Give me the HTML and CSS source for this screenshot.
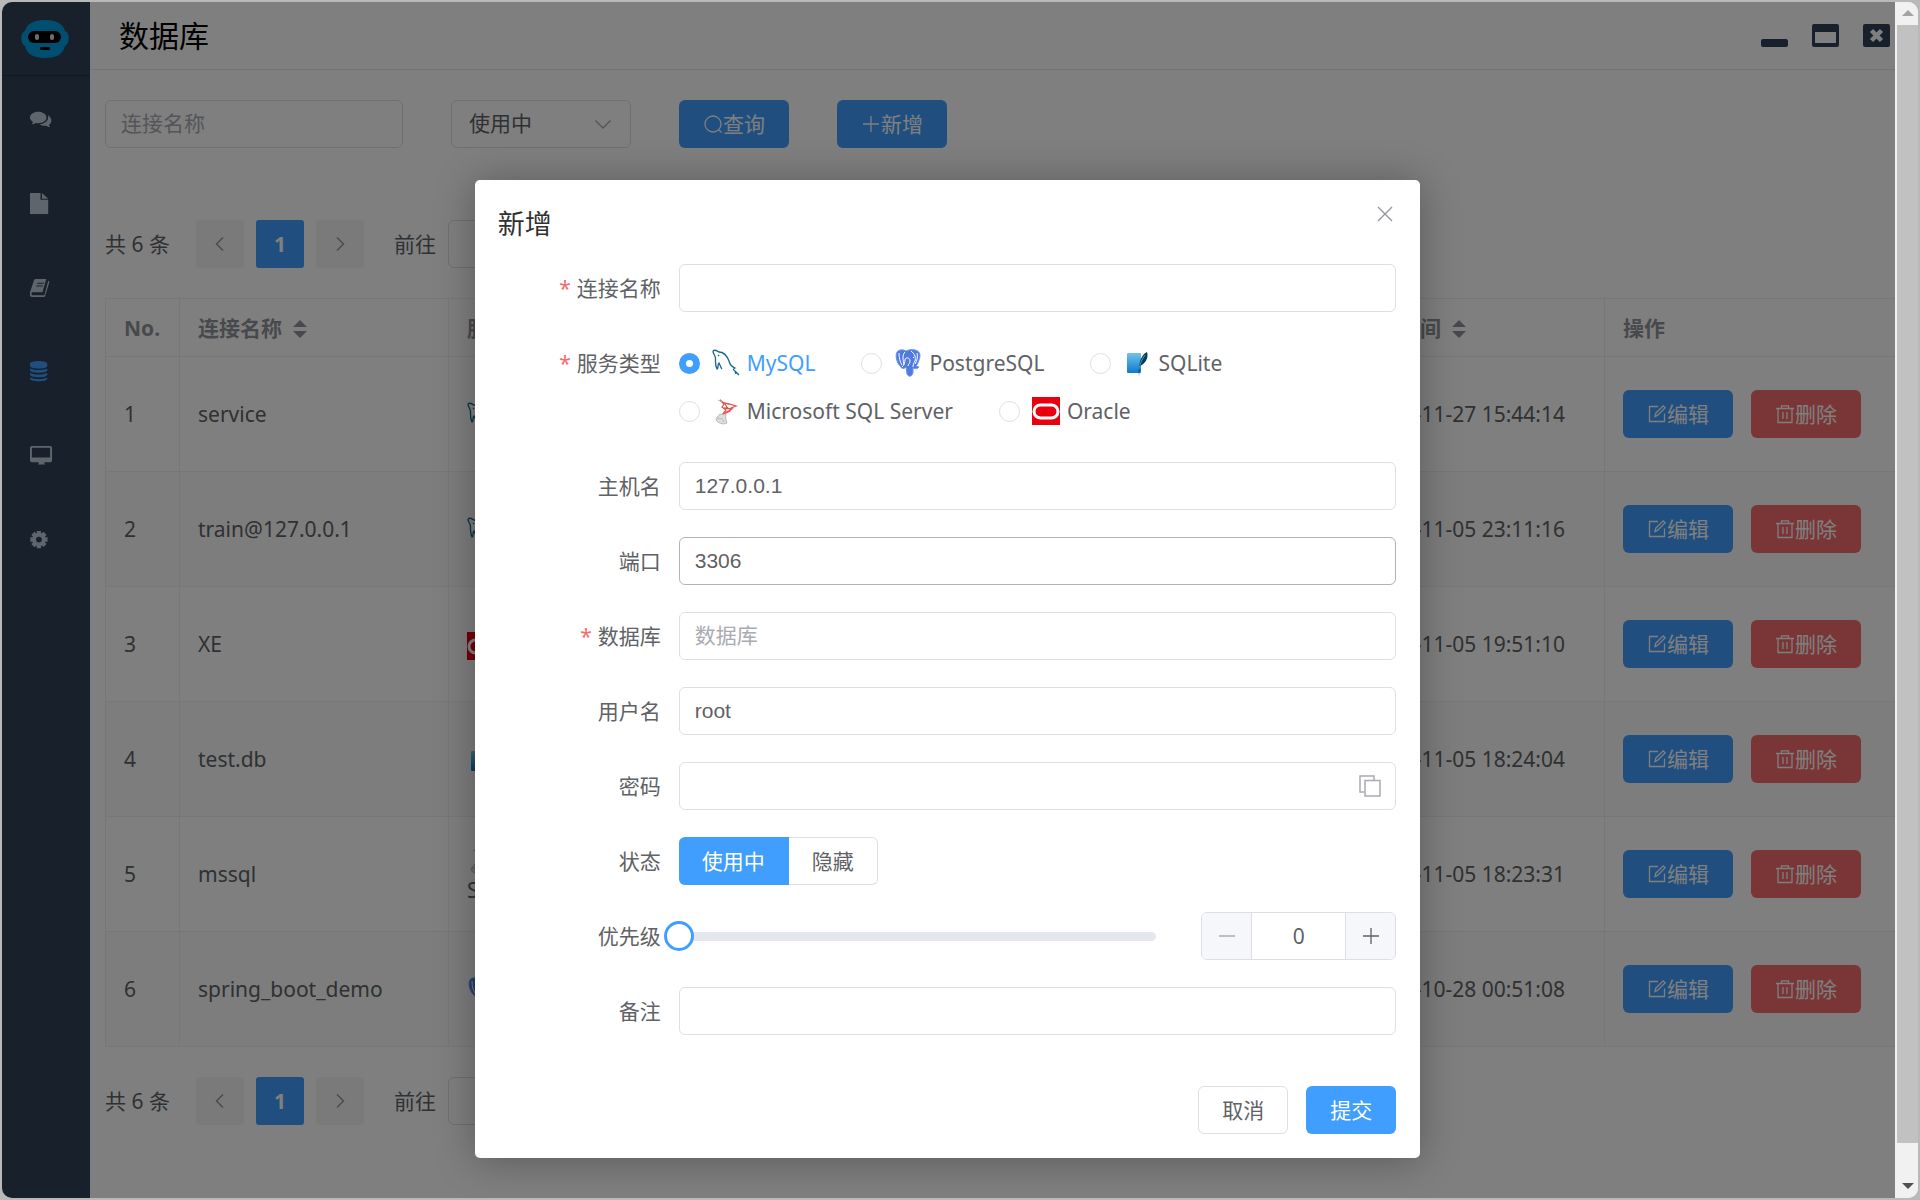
FILE: index.html
```html
<!DOCTYPE html>
<html lang="zh-CN">
<head>
<meta charset="utf-8">
<title>数据库</title>
<link rel="stylesheet" href="styles.css">
</head>
<body>
<svg class="sprite" aria-hidden="true">
  <symbol id="i-edit" viewBox="0 0 20 20"><path d="M11 2.500H2.500v15h15V9.500M8 12.500l.8-3.300 7.400-7.400 2 2-7.400 7.400z" fill="none" stroke="currentColor" stroke-width="1.300"/></symbol>
  <symbol id="i-trash" viewBox="0 0 20 20"><path d="M1 4.500h18M6.500 4.500V1.800h7v2.700M3 4.500v14h14v-14M8 8v7M12 8v7" fill="none" stroke="currentColor" stroke-width="1.300"/></symbol>
  <symbol id="i-search" viewBox="0 0 20 20"><path d="M15.200 15.200l3.300 3.300M18 10a8 8 0 1 1-16 0 8 8 0 0 1 16 0z" fill="none" stroke="currentColor" stroke-width="1.300"/></symbol>
  <symbol id="i-plus" viewBox="0 0 20 20"><path d="M10 2v16M2 10h16" fill="none" stroke="currentColor" stroke-width="1.300"/></symbol>
  <symbol id="i-minus" viewBox="0 0 20 20"><path d="M2 10h16" fill="none" stroke="currentColor" stroke-width="1.300"/></symbol>
  <symbol id="i-left" viewBox="0 0 20 20"><path d="M13 3.500L6.500 10l6.500 6.500" fill="none" stroke="currentColor" stroke-width="1.400"/></symbol>
  <symbol id="i-right" viewBox="0 0 20 20"><path d="M7 3.500l6.500 6.500L7 16.500" fill="none" stroke="currentColor" stroke-width="1.400"/></symbol>
  <symbol id="i-down" viewBox="0 0 20 20"><path d="M2.500 6.500L10 14l7.500-7.500" fill="none" stroke="currentColor" stroke-width="1.400"/></symbol>
  <symbol id="i-sort" viewBox="0 0 14 20"><path d="M0 8l7-7 7 7zM0 12l7 7 7-7z" fill="currentColor"/></symbol>
  <symbol id="i-mysql" viewBox="0 0 28 28"><path d="M1 2c2-2 4 0 6 1 5 0 8 4 10 9 1 4 3 6 6 7-2 1-2 2 0 3l4 4M1 2c0 3 2 4 2.500 7 0 4-.5 7 1.500 11 2-1 0-4 2-6 1 2 2 5 3 6M23 22l1 3M6 6l1 1" fill="none" stroke="#12688f" stroke-width="1.300"/></symbol>
  <symbol id="i-postgres" viewBox="0 0 28 28"><path d="M4 2c3-2 6-1 8 0 3-1 5-2 9-1 5 1 6 5 4 10-1 3-2 5-3 6l3 1c-1 2-4 2-6 1v5c-1 4-5 4-6 1l-1-7c-2 2-4 2-5 0C3 15 0 5 4 2z" fill="#4f7be0" stroke="#7096e8" stroke-width="1"/><path d="M11 3c-3 3-2 8-1 13M8 18c2-2 3-4 3-8 2-2 5-1 5 2s-2 3-2 5M17 2c4 3 5 7 4 10-1 2-2 3-2 6M20 8l-1 1M5 4c0 5 1 9 3 12M23 4c1 4 0 8-2 11" fill="none" stroke="#fff" stroke-width="1"/></symbol>
  <symbol id="i-sqlite" viewBox="0 0 28 28"><defs><linearGradient id="g-sqlite" x2="0" y2="1"><stop stop-color="#74c2ea"/><stop offset="1" stop-color="#0b7cc9"/></linearGradient></defs><rect x="4" y="4" width="14" height="20" rx="1" fill="url(#g-sqlite)"/><path d="M24 3c2 6-2 12-7 14l-1 10c-1-9 1-21 8-24z" fill="#073c58"/><path d="M22 6c-3 4-5 9-6 14" fill="none" stroke="#3a9ccf"/></symbol>
  <symbol id="i-mssql" viewBox="0 0 28 28"><path d="M8 3l4 3 5 1 7 2-5 2-1 3-8 4 4-5-4-3 2-3zM13 7l3 5M12 11l8 1-7 4" fill="none" stroke="#e2554f" stroke-width="1.300"/><path d="M6 3l4 2M8 17c2 1 4 0 6 0-1 3 0 6 1 9-4 2-9 0-11-3 0-2 2-4 4-6zM5 22c3-2 6 0 7 3" fill="#ddd" stroke="#b8b8b8"/></symbol>
  <symbol id="i-oracle" viewBox="0 0 28 28"><path d="M0 0h28v28H0z" fill="#e9000f"/><rect x="2" y="8" width="24" height="13" rx="6.500" fill="none" stroke="#fff" stroke-width="3"/></symbol>
</svg>

<div class="window">
  <div class="app">
    <nav class="sidebar" aria-label="主菜单">
      <a class="logo" href="#" aria-label="首页"><svg viewBox="0 0 48 38"><path d="M24 0c12 0 18 4 20 11 5 2 5 12 0 15-2 8-8 12-20 12S6 34 4 26c-5-3-5-13 0-15C6 4 12 0 24 0z" fill="#009ee3"/><rect x="7" y="11" width="33" height="12" rx="6"/><rect x="14" y="14" width="4" height="6" rx="2" fill="#ddd"/><rect x="29" y="14" width="4" height="6" rx="2" fill="#ddd"/><rect x="19" y="27" width="10" height="3" rx="1"/></svg></a>
      <ul class="menu">
        <li><a href="#" aria-label="对话"><svg viewBox="0 0 24 20"><path d="M8.500 2C3.800 2 0 4.800 0 8c0 2 1.200 3.600 3.200 4.700-.3.900-1 1.700-1.500 2.200 1.600 0 3-.5 4.300-1.300 6.500 1 11.200-1.800 11.200-5.600C17.200 4.800 13.300 2 8.500 2z" fill="currentColor"/><path d="M18.600 5.500c1.600 4.700-2.200 8.700-8.600 9.500 2 1.500 4.700 1.800 6.800 1.400 1.300.8 2.600 1.300 4.200 1.300-.5-.5-1-1.100-1.300-1.900 3.500-2.500 3.700-8-1.100-10.300z" fill="currentColor"/></svg></a></li>
        <li><a href="#" aria-label="文档"><svg viewBox="0 0 24 24"><path d="M0 1h11v7h8v15H0zM12.500 1L19 7h-6.500z" fill="currentColor"/></svg></a></li>
        <li><a href="#" aria-label="知识库"><svg viewBox="0 0 24 24"><path d="M6 3h11l-4 14H3c-2 0-2 3 0 3h12l4-15c1 0 1 1 1 2l-4 13c0 1-1 2-2 2H3c-3 0-4-2-3-5L4 5c0-1 1-2 2-2zM8 7l-1 1h7l1-1zm-1 3l-1 1h7l1-1z" fill="currentColor" fill-rule="evenodd"/></svg></a></li>
        <li class="active"><a href="#" aria-label="数据库"><svg viewBox="0 0 24 24"><path d="M0 4c0-4 18-4 18 0v2c0 4-18 4-18 0zM0 8.500c2 2.500 16 2.500 18 0v2.300c0 3.500-18 3.500-18 0zM0 13.200c2 2.500 16 2.500 18 0v2.300c0 3.500-18 3.500-18 0zM0 18c2 2.500 16 2.500 18 0v1.500c0 3.500-18 3.500-18 0z" fill="currentColor"/></svg></a></li>
        <li><a href="#" aria-label="监控"><svg viewBox="0 0 24 24"><path d="M2 2h19q2 0 2 2v13q0 2-2 2h-6v1.500l1 1h-8l1-1V19H2q-2 0-2-2V4q0-2 2-2zm0 2v10h19V4z" fill="currentColor" fill-rule="evenodd"/></svg></a></li>
        <li><a href="#" aria-label="设置"><svg viewBox="0 0 24 24"><path d="M9.300 3v18M3 5.600l12.700 12.700M.3 12h18M3 18.400L15.700 5.600" stroke="currentColor" stroke-width="4.500"/><circle cx="9.300" cy="12" r="5" fill="none" stroke="currentColor" stroke-width="4"/><circle cx="9.300" cy="12" r="3" fill="#304156"/></svg></a></li>
      </ul>
    </nav>
    <main class="main">
      <header class="topbar">
        <h1>数据库</h1>
        <div class="controls">
          <button type="button" aria-label="最小化"><svg viewBox="0 0 27 23"><rect y="15" width="27" height="8" rx="2" fill="currentColor"/></svg></button>
          <button type="button" aria-label="最大化"><svg viewBox="0 0 27 23"><path d="M2 0h23q2 0 2 2v19q0 2-2 2H2q-2 0-2-2V2q0-2 2-2zm1 8v11h21V8z" fill="currentColor" fill-rule="evenodd"/></svg></button>
          <button type="button" aria-label="关闭"><svg viewBox="0 0 27 23"><rect width="27" height="23" rx="2" fill="currentColor"/><path d="M8.500 6.500l10 10m0-10l-10 10" stroke="#fff" stroke-width="4.500"/></svg></button>
        </div>
      </header>
      <div class="content">
        <form class="search">
          <input class="field name-filter" type="text" placeholder="连接名称" aria-label="连接名称">
          <div class="select">
            <select class="field" aria-label="状态"><option>使用中</option><option>隐藏</option></select>
            <svg><use href="#i-down"/></svg>
          </div>
          <button class="btn primary" type="button"><svg><use href="#i-search"/></svg>查询</button>
          <button class="btn primary" type="button"><svg><use href="#i-plus"/></svg>新增</button>
        </form>
        <div class="pager">
          <span class="total">共 6 条</span>
          <button type="button" aria-label="上一页"><svg><use href="#i-left"/></svg></button>
          <button type="button" class="current">1</button>
          <button type="button" aria-label="下一页"><svg><use href="#i-right"/></svg></button>
          <label class="jump">前往<input class="field" type="text"></label>
        </div>
        <table class="grid">
          <colgroup><col class="c-no"><col class="c-name"><col class="c-type"><col class="c-rest"><col class="c-time"><col class="c-ops"></colgroup>
          <thead><tr><th>No.</th><th>连接名称<svg class="sort"><use href="#i-sort"/></svg></th><th>服务类型</th><th></th><th>更新时间<svg class="sort"><use href="#i-sort"/></svg></th><th>操作</th></tr></thead>
          <tbody>
            <tr><td>1</td><td>service</td><td><svg class="db"><use href="#i-mysql"/></svg>MySQL</td><td></td><td class="time">2022-11-27 15:44:14</td><td><div class="ops"><button class="btn primary" type="button"><svg><use href="#i-edit"/></svg>编辑</button><button class="btn danger" type="button"><svg><use href="#i-trash"/></svg>删除</button></div></td></tr>
            <tr><td>2</td><td>train@127.0.0.1</td><td><svg class="db"><use href="#i-mysql"/></svg>MySQL</td><td></td><td class="time">2022-11-05 23:11:16</td><td><div class="ops"><button class="btn primary" type="button"><svg><use href="#i-edit"/></svg>编辑</button><button class="btn danger" type="button"><svg><use href="#i-trash"/></svg>删除</button></div></td></tr>
            <tr><td>3</td><td>XE</td><td><svg class="db"><use href="#i-oracle"/></svg>Oracle</td><td></td><td class="time">2022-11-05 19:51:10</td><td><div class="ops"><button class="btn primary" type="button"><svg><use href="#i-edit"/></svg>编辑</button><button class="btn danger" type="button"><svg><use href="#i-trash"/></svg>删除</button></div></td></tr>
            <tr><td>4</td><td>test.db</td><td><svg class="db"><use href="#i-sqlite"/></svg>SQLite</td><td></td><td class="time">2022-11-05 18:24:04</td><td><div class="ops"><button class="btn primary" type="button"><svg><use href="#i-edit"/></svg>编辑</button><button class="btn danger" type="button"><svg><use href="#i-trash"/></svg>删除</button></div></td></tr>
            <tr><td>5</td><td>mssql</td><td><svg class="db"><use href="#i-mssql"/></svg>Microsoft<br>SQL Server</td><td></td><td class="time">2022-11-05 18:23:31</td><td><div class="ops"><button class="btn primary" type="button"><svg><use href="#i-edit"/></svg>编辑</button><button class="btn danger" type="button"><svg><use href="#i-trash"/></svg>删除</button></div></td></tr>
            <tr><td>6</td><td>spring_boot_demo</td><td><svg class="db"><use href="#i-postgres"/></svg>PostgreSQL</td><td></td><td class="time">2022-10-28 00:51:08</td><td><div class="ops"><button class="btn primary" type="button"><svg><use href="#i-edit"/></svg>编辑</button><button class="btn danger" type="button"><svg><use href="#i-trash"/></svg>删除</button></div></td></tr>
          </tbody>
        </table>
        <div class="pager">
          <span class="total">共 6 条</span>
          <button type="button" aria-label="上一页"><svg><use href="#i-left"/></svg></button>
          <button type="button" class="current">1</button>
          <button type="button" aria-label="下一页"><svg><use href="#i-right"/></svg></button>
          <label class="jump">前往<input class="field" type="text"></label>
        </div>
      </div>
    </main>
    <div class="overlay">
      <form class="dialog" role="dialog" aria-labelledby="dlg-title">
        <header class="dialog-head">
          <h2 id="dlg-title">新增</h2>
          <button type="button" class="close" aria-label="关闭"><svg viewBox="0 0 16 16"><path d="M1 1l14 14M15 1L1 15" stroke="currentColor" stroke-width="1.300"/></svg></button>
        </header>
        <div class="rows">
          <div class="row"><label class="req" for="f-name">连接名称</label><input id="f-name" class="field" type="text"></div>
          <div class="row top"><span class="label req" id="l-type">服务类型</span>
            <div class="radios" role="radiogroup" aria-labelledby="l-type">
              <label><input type="radio" name="type" checked><svg class="db"><use href="#i-mysql"/></svg><span>MySQL</span></label>
              <label><input type="radio" name="type"><svg class="db"><use href="#i-postgres"/></svg><span>PostgreSQL</span></label>
              <label><input type="radio" name="type"><svg class="db"><use href="#i-sqlite"/></svg><span>SQLite</span></label>
              <label><input type="radio" name="type"><svg class="db"><use href="#i-mssql"/></svg><span>Microsoft SQL Server</span></label>
              <label><input type="radio" name="type"><svg class="db"><use href="#i-oracle"/></svg><span>Oracle</span></label>
            </div>
          </div>
          <div class="row"><label for="f-host">主机名</label><input id="f-host" class="field" type="text" value="127.0.0.1"></div>
          <div class="row"><label for="f-port">端口</label><input id="f-port" class="field hover" type="text" value="3306"></div>
          <div class="row"><label class="req" for="f-db">数据库</label><input id="f-db" class="field" type="text" placeholder="数据库"></div>
          <div class="row"><label for="f-user">用户名</label><input id="f-user" class="field" type="text" value="root"></div>
          <div class="row"><label for="f-pass">密码</label>
            <div class="suffix"><input id="f-pass" class="field" type="password"><button type="button" aria-label="复制"><svg viewBox="0 0 24 24"><path d="M6 18H2V2h14v4M7 6.500h15V22H7z" fill="none" stroke="currentColor" stroke-width="1.500"/></svg></button></div></div>
          <div class="row"><span class="label" id="l-state">状态</span>
            <div class="segments" role="radiogroup" aria-labelledby="l-state"><label><input type="radio" name="state" checked><span>使用中</span></label><label><input type="radio" name="state"><span>隐藏</span></label></div></div>
          <div class="row"><label for="f-prio">优先级</label>
            <div class="priority"><input id="f-prio" class="slider" type="range" min="0" max="100" value="0">
              <div class="stepper"><button type="button" aria-label="减少" disabled><svg><use href="#i-minus"/></svg></button><input type="text" value="0" aria-label="优先级数值"><button type="button" aria-label="增加"><svg><use href="#i-plus"/></svg></button></div></div></div>
          <div class="row"><label for="f-note">备注</label><input id="f-note" class="field" type="text"></div>
        </div>
        <footer class="dialog-foot"><button type="button" class="btn plain">取消</button><button type="submit" class="btn primary">提交</button></footer>
      </form>
    </div>
  </div>
  <div class="scrollbar" aria-hidden="true"><svg class="up" viewBox="0 0 12 6"><path d="M0 6l6-6 6 6z" fill="#a3a3a3"/></svg><div class="thumb"></div><svg class="dn" viewBox="0 0 12 6"><path d="M0 0h12L6 6z" fill="#505050"/></svg></div>
</div>
</body>
</html>
```

FILE: styles.css
```css
* { box-sizing: border-box; }

body {
  margin: 0;
  height: 100vh;
  padding: 2px;
  overflow: hidden;
  background: #b9b9b9;
  color: #606266;
  font: 21px/30px "Noto Sans", "Noto Sans CJK SC", sans-serif;
}

button, input, select { font: inherit; color: inherit; margin: 0; }
button { padding: 0; border: 0; background: none; cursor: pointer; }
svg { display: block; flex: none; }
.sprite { position: absolute; width: 0; height: 0; }

.window { display: flex; height: 100%; border-radius: 10px; overflow: hidden; background: #f1f1f1; }
.app { position: relative; display: flex; flex: 1; min-width: 0; overflow: hidden; background: #fff; }

/* sidebar */
.sidebar { flex: none; width: 88px; background: #304156; }
.logo { display: flex; align-items: center; justify-content: center; height: 74px; padding-right: 2px; border-bottom: 1px solid #233145; }
.logo svg { width: 48px; height: 38px; }
.menu { list-style: none; margin: 0; padding: 1px 0 0; }
.menu a { display: flex; align-items: center; height: 84px; padding-left: 28px; color: #bfcbd9; }
.menu svg { width: 23px; height: 23px; }
.menu .active a { color: #409eff; }

/* header */
.main { flex: 1; min-width: 0; overflow: hidden; }
.topbar { display: flex; align-items: center; justify-content: space-between; height: 68px; padding: 0 5px 0 29px; border-bottom: 1px solid #e6e6e6; }
.topbar h1 { margin: 0; font-size: 30px; font-weight: 400; line-height: 45px; color: #000; }
.controls { display: flex; gap: 24px; color: #304156; }
.controls svg { width: 27px; height: 23px; }

.content { padding: 30px 0 0 15px; }
.search { display: flex; gap: 48px; }
.field { width: 100%; height: 48px; padding: 0 15px; border: 1px solid #dcdfe6; border-radius: 6px; background: #fff; outline: 0; font-family: "Liberation Sans", "Noto Sans CJK SC", sans-serif; }
.field::placeholder { color: #a8abb2; opacity: 1; }
.field.hover { border-color: #b0b3ba; }
.name-filter { width: 298px; }
.select { position: relative; width: 180px; }
.select select { appearance: none; padding: 0 17px; }
.select svg { position: absolute; right: 18px; top: 14px; width: 20px; height: 20px; color: #a8abb2; pointer-events: none; }

.btn { display: flex; align-items: center; justify-content: center; height: 48px; padding: 0 23px; border: 1px solid transparent; border-radius: 6px; white-space: nowrap; }
.btn svg { width: 20px; height: 20px; }
.primary { background: #409eff; color: #fff; }
.danger { background: #f56c6c; color: #fff; }
.plain { background: #fff; border-color: #dcdfe6; }

.pager { display: flex; align-items: center; padding: 72px 0 30px; gap: 12px; }
.grid + .pager { padding-top: 30px; }
.total { margin-right: 14px; }
.pager button { display: flex; align-items: center; justify-content: center; width: 48px; height: 48px; border-radius: 3px; background: #f4f4f5; color: #909399; }
.pager button svg { width: 20px; height: 20px; }
.pager .current { background: #409eff; color: #fff; font-weight: 700; }
.jump { display: flex; align-items: center; gap: 12px; margin-left: 18px; }
.jump .field { width: 75px; }

/* table */
.grid { width: 100%; table-layout: fixed; border-collapse: separate; border-spacing: 0; border-top: 1px solid #ebeef5; border-left: 1px solid #ebeef5; }
.grid th, .grid td { padding: 0 18px; border-right: 1px solid #ebeef5; border-bottom: 1px solid #ebeef5; text-align: left; white-space: nowrap; overflow: hidden; }
.grid th { height: 58px; color: #909399; font-weight: 700; }
.grid td { height: 115px; }
.grid th:last-child, .grid td:last-child { border-right: 0; }
.grid tbody tr:nth-child(even) { background: #fafafa; }
.grid .time { padding-right: 39px; text-align: right; }
.c-no { width: 74px; }
.c-name { width: 269px; }
.c-type { width: 170px; }
.c-time { width: 266px; }
.c-ops { width: 290px; }
.sort { display: inline-block; width: 14px; height: 20px; margin-left: 11px; vertical-align: -3px; }
.db { display: inline-block; width: 28px; height: 28px; vertical-align: middle; margin-right: 7px; }
.ops { display: flex; gap: 18px; }

/* dialog */
.overlay { position: absolute; inset: 0; display: flex; align-items: flex-start; justify-content: center; padding: 178px 2px 0 0; background: rgba(0, 0, 0, .5); }
.dialog { width: 50%; border-radius: 5px; background: #fff; box-shadow: 0 2px 40px rgba(0, 0, 0, .3); }
.dialog-head { display: flex; justify-content: space-between; align-items: flex-start; padding: 26px 27px 22px 23px; }
.dialog-head h2 { margin: 0; font-size: 27px; font-weight: 400; line-height: 36px; color: #303133; }
.close { display: flex; color: #909399; }
.close svg { width: 16px; height: 16px; }
.rows { display: flex; flex-direction: column; gap: 27px; padding: 0 24px; }
.row { display: grid; grid-template-columns: 162px minmax(0, 1fr); column-gap: 18px; align-items: center; min-height: 48px; }
.row.top { align-items: start; }
.row > label, .row > .label { text-align: right; line-height: 48px; height: 48px; }
.req::before { content: "*"; margin-right: 6px; color: #f56c6c; }
.radios { display: flex; flex-wrap: wrap; column-gap: 46px; }
.radios label { display: flex; align-items: center; height: 48px; }
.radios input { appearance: none; width: 21px; height: 21px; margin-right: 12px; border: 1px solid #dcdfe6; border-radius: 50%; background: #fff; }
.radios input:checked { border: 7px solid #409eff; }
.radios input:checked ~ span { color: #409eff; }
.suffix { position: relative; }
.suffix button { position: absolute; right: 14px; top: 12px; color: #a8abb2; }
.suffix svg { width: 24px; height: 24px; }
.segments { display: flex; }
.segments input { position: absolute; opacity: 0; }
.segments span { display: block; height: 48px; padding: 0 23px; border: 1px solid #dcdfe6; border-left: 0; border-radius: 0 6px 6px 0; line-height: 46px; }
.segments label:first-child span { border-radius: 6px 0 0 6px; }
.segments input:checked + span { background: #409eff; border-color: #409eff; color: #fff; }
.priority { display: flex; justify-content: space-between; gap: 30px; }
.slider { appearance: none; flex: 1; height: 48px; margin: 0 0 0 -15px; background: none; }
.slider::-webkit-slider-runnable-track { height: 9px; border-radius: 5px; background: linear-gradient(90deg, transparent 15px, #e4e7ed 15px); }
.slider::-webkit-slider-thumb { appearance: none; width: 30px; height: 30px; margin-top: -11px; border: 3px solid #409eff; border-radius: 50%; background: #fff; }
.stepper { display: flex; width: 195px; height: 48px; margin-left: 15px; border: 1px solid #dcdfe6; border-radius: 6px; overflow: hidden; }
.stepper button { display: flex; align-items: center; justify-content: center; width: 49px; background: #f5f7fa; }
.stepper button:disabled { color: #a8abb2; }
.stepper button svg { width: 20px; height: 20px; }
.stepper input { flex: 1; min-width: 0; border: solid #dcdfe6; border-width: 0 1px; text-align: center; }
.dialog-foot { display: flex; justify-content: flex-end; gap: 18px; padding: 51px 24px 24px; }

/* scrollbar */
.scrollbar { display: flex; flex-direction: column; align-items: center; flex: none; width: 23px; padding-left: 2px; background: #f1f1f1; }
.scrollbar svg { width: 12px; height: 6px; margin: 8px 0 9px; }
.scrollbar .thumb { width: 100%; flex: 1; margin-bottom: 32px; background: #c1c1c1; }
```
